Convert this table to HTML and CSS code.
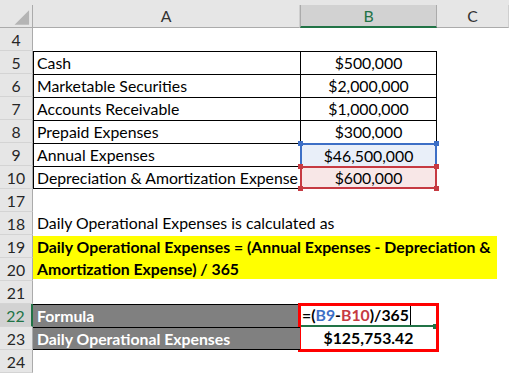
FILE: index.html
```html
<!DOCTYPE html>
<html>
<head>
<meta charset="utf-8">
<link rel="stylesheet" href="styles.css">
</head>
<body>
<div class="sheet">
  <div class="topstrip"></div>
  <div class="grid">
    <div class="hd corner"><svg width="33" height="23" viewBox="0 0 33 23"><polygon points="30,5 30,20 15,20" fill="#b4b4b4"/></svg></div>
    <div class="hd">A</div>
    <div class="hd hd-active">B</div>
    <div class="hd">C</div>

    <div class="rh">4</div><div class="c"></div><div class="c"></div><div class="c"></div>

    <div class="rh">5</div><div class="c tA">Cash</div><div class="c tB">$500,000</div><div class="c"></div>
    <div class="rh">6</div><div class="c tA">Marketable Securities</div><div class="c tB">$2,000,000</div><div class="c"></div>
    <div class="rh">7</div><div class="c tA">Accounts Receivable</div><div class="c tB">$1,000,000</div><div class="c"></div>
    <div class="rh">8</div><div class="c tA">Prepaid Expenses</div><div class="c tB">$300,000</div><div class="c"></div>
    <div class="rh">9</div><div class="c tA">Annual Expenses</div><div class="c tB sel-blue">$46,500,000<span class="hdl hdl-tl b"></span><span class="hdl hdl-tr b"></span></div><div class="c"></div>
    <div class="rh">10</div><div class="c tA last">Depreciation &amp; Amortization Expense</div><div class="c tB sel-red">$600,000<span class="hdl hdl-tl r"></span><span class="hdl hdl-tr r"></span><span class="hdl hdl-bl r"></span><span class="hdl hdl-br r"></span></div><div class="c"></div>

    <div class="rh">17</div><div class="c"></div><div class="c"></div><div class="c"></div>
    <div class="rh">18</div><div class="c span3">Daily Operational Expenses is calculated as</div>
    <div class="rh">19</div>
    <div class="c span3 merged"><div class="yellow">Daily Operational Expenses = (Annual Expenses - Depreciation &amp;<br>Amortization Expense) / 365</div></div>
    <div class="rh">20</div>
    <div class="rh">21</div><div class="c"></div><div class="c"></div><div class="c"></div>
    <div class="rh rh-active">22</div><div class="c dark">Formula</div>
    <div class="c fblock">
      <div class="fcell"><span>=(</span><span class="ref-b">B9</span><span>-</span><span class="ref-r">B10</span><span>)/365</span><span class="caret"></span><span class="fill-hdl"></span></div>
      <div class="vcell">$125,753.42</div>
    </div>
    <div class="c"></div>
    <div class="rh">23</div><div class="c dark lastdark">Daily Operational Expenses</div><div class="c"></div>
    <div class="rh">24</div><div class="c"></div><div class="c"></div><div class="c"></div>
  </div>
</div>
</body>
</html>
```
FILE: styles.css
```css
html, body {
  margin: 0;
  padding: 0;
  background: #fff;
}
body {
  width: 509px;
  height: 375px;
  overflow: hidden;
  font-family: Lato, "Liberation Sans", sans-serif;
  font-size: 15.8px;
  color: #000;
}
.topstrip {
  height: 5px;
  background: #e6e6e6;
}
.grid {
  display: grid;
  grid-template-columns: 33px 267px 137px 72px;
  grid-auto-rows: 23px;
}
.hd {
  box-sizing: border-box;
  background: #e6e6e6;
  border-right: 1px solid #cfcfcf;
  border-bottom: 1px solid #ababab;
  display: flex;
  align-items: center;
  justify-content: center;
  color: #333;
  line-height: 22px;
}
.corner {
  border-right: 1px solid #ababab;
}
.corner svg { display: block; }
.hd-active {
  background: #d2d2d2;
  border-bottom: 2px solid #217346;
  color: #217346;
  border-right-color: #ababab;
  border-left: 1px solid #ababab;
}
.rh {
  box-sizing: border-box;
  background: #e6e6e6;
  border-right: 1px solid #ababab;
  border-bottom: 1px solid #d4d4d4;
  text-align: center;
  line-height: 23px;
  color: #262626;
}
.rh-active {
  background: #d2d2d2;
  color: #217346;
  border-right: 2px solid #217346;
}
.c {
  box-sizing: border-box;
  line-height: 22px;
  white-space: nowrap;
  position: relative;
}
.tA {
  border-top: 1px solid #000;
  border-left: 1px solid #000;
  padding-left: 3px;
}
.tA.last {
  border-bottom: 1px solid #000;
}
.tB {
  border-top: 1px solid #000;
  border-left: 1px solid #000;
  border-right: 1px solid #000;
  text-align: center;
}
.sel-blue {
  background: #e9eff9;
  border-top: 2px solid #3d6fc6;
  border-left: 2px solid #3d6fc6;
  border-right: 2px solid #3d6fc6;
  line-height: 21px;
  z-index: 2;
}
.sel-red {
  background: #f8e7e7;
  border: 2px solid #c63a42;
  line-height: 19px;
  z-index: 3;
}
.hdl {
  position: absolute;
  width: 5px;
  height: 5px;
}
.hdl.b { background: #3d6fc6; }
.hdl.r { background: #c63a42; }
.hdl-tl { left: -4px; top: -4px; }
.hdl-tr { right: -4px; top: -4px; }
.hdl-bl { left: -4px; bottom: -4px; }
.hdl-br { right: -4px; bottom: -4px; }
.span3 {
  grid-column: 2 / span 3;
  padding-left: 4px;
}
.merged {
  grid-row: span 2;
  padding-left: 0;
  padding-top: 1px;
}
.yellow {
  width: 464px;
  height: 43px;
  background: #ffff00;
  font-weight: bold;
  line-height: 22px;
  padding-left: 4px;
  box-sizing: border-box;
}
.dark {
  background: #808080;
  color: #fff;
  font-weight: bold;
  border-top: 1px solid #000;
  padding-left: 4px;
}
.lastdark {
  border-bottom: 1px solid #000;
}
.fblock {
  grid-row: span 2;
  display: flex;
  flex-direction: column;
  font-weight: bold;
}
.fblock::after {
  content: "";
  position: absolute;
  left: -2px;
  top: -1px;
  right: -2px;
  bottom: -2px;
  border: 3px solid #ff0000;
  pointer-events: none;
}
.fcell {
  height: 23px;
  box-sizing: border-box;
  border-bottom: 2px solid #217346;
  padding-left: 2px;
  line-height: 23px;
  position: relative;
  display: flex;
  align-items: center;
}
.ref-b { color: #3d6fc6; }
.ref-r { color: #c63a42; }
.caret {
  display: inline-block;
  width: 1px;
  height: 20px;
  background: #000;
  margin-left: 1px;
}
.fill-hdl {
  position: absolute;
  right: -1px;
  bottom: -4px;
  width: 5px;
  height: 5px;
  background: #217346;
}
.vcell {
  height: 23px;
  line-height: 22px;
  text-align: center;
}
```
